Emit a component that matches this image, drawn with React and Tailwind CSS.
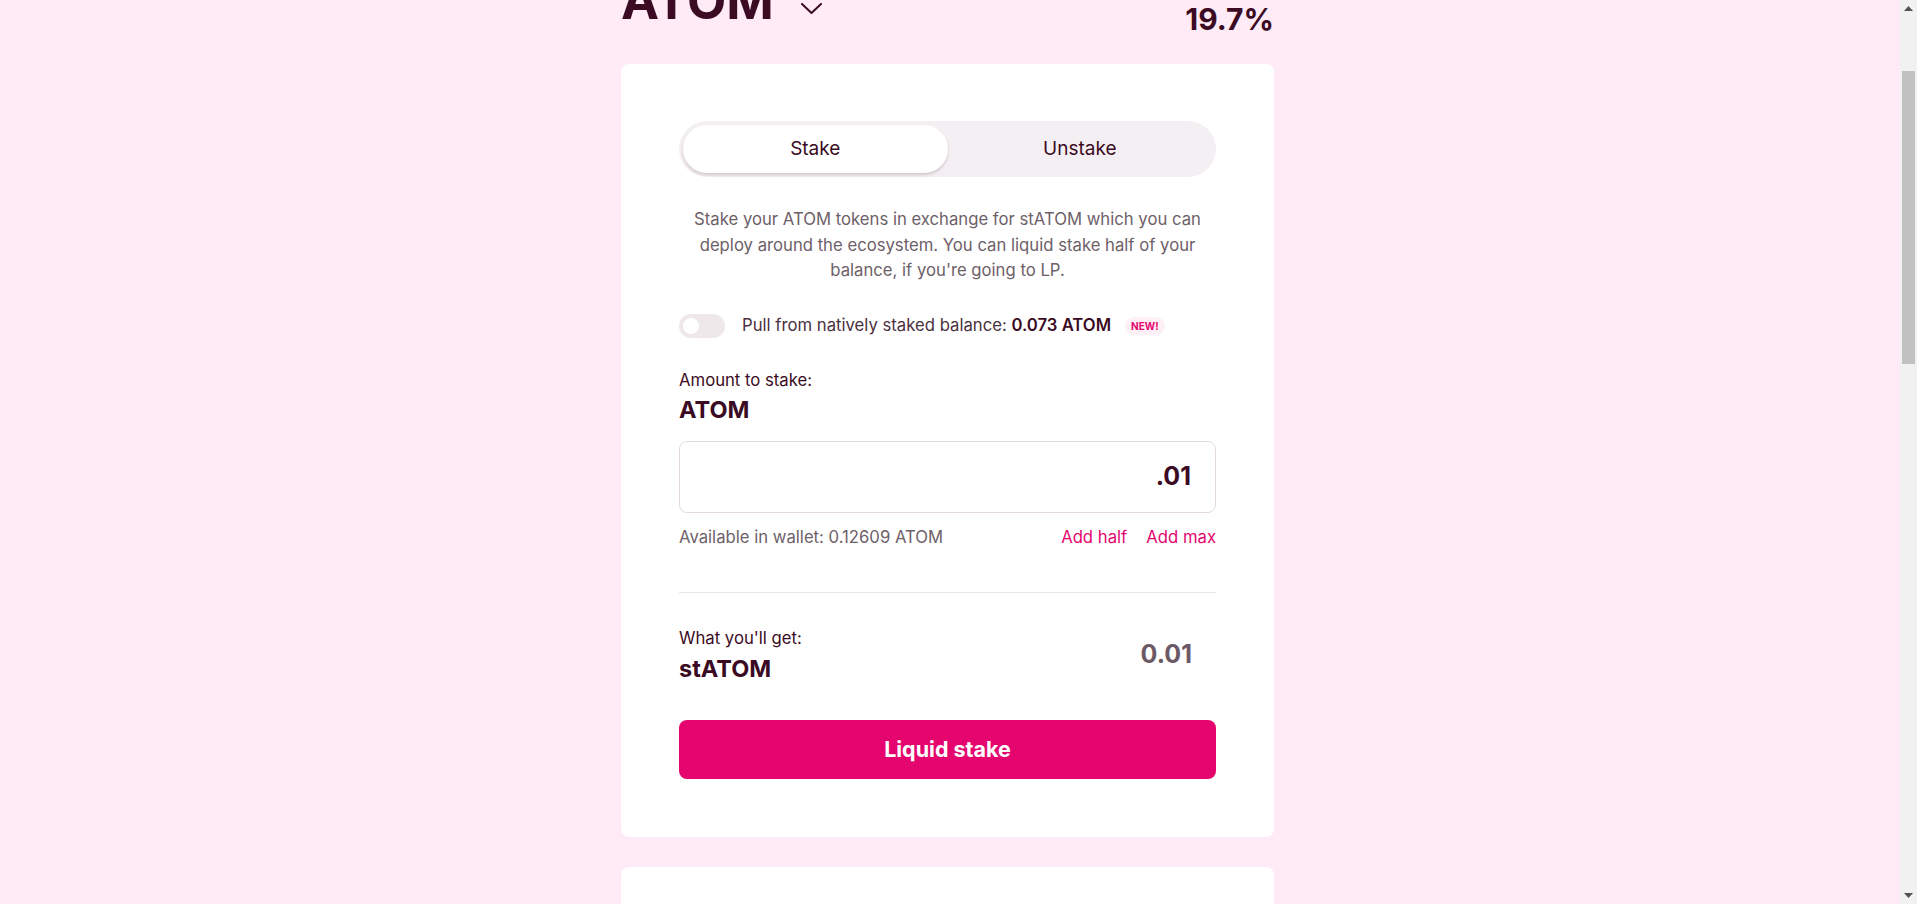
import React from "react";

const dark = "text-[#3a0b23]";

export default function App() {
  return (
    <div
      className="flex h-[904px] w-full overflow-hidden bg-[#feebf6]"
      style={{ fontFamily: "Inter, 'Noto Sans', sans-serif" }}
    >
      <div className="flex-1 min-w-0 pr-[5px]">
        <div className="mx-auto w-[653px]">
          {/* Header */}
          <div className="-mt-[25px] flex justify-between items-start">
            <div className="flex items-center">
              <span className={`text-[51px] leading-[52px] font-bold ${dark}`}>ATOM</span>
              <svg className="ml-[27px] mt-[14px]" width="21" height="11" viewBox="0 0 21 11" fill="none">
                <path d="M1 1 L10.5 10 L20 1" stroke="#3a0b23" strokeWidth="2" strokeLinecap="round" strokeLinejoin="round" />
              </svg>
            </div>
            <div className={`mt-[30px] text-[30px] leading-[28px] font-bold ${dark}`}>19.7%</div>
          </div>

          {/* Card */}
          <div className="mt-[31px] rounded-[8px] bg-white px-[58px] pt-[57px] pb-[58px]">
            {/* Tabs */}
            <div className="flex h-[56px] rounded-full bg-[#f4eff2] p-[4px]">
              <div className={`flex flex-1 items-center justify-center rounded-full bg-white text-[19px] shadow-[0_2px_3px_rgba(60,20,40,0.18)] ${dark}`}>
                Stake
              </div>
              <div className={`flex flex-1 items-center justify-center text-[19px] ${dark}`}>
                Unstake
              </div>
            </div>

            <p className="mt-[30px] text-center text-[16.7px] leading-[25.6px] text-[#6d6068]">
              Stake your ATOM tokens in exchange for stATOM which you can deploy around the ecosystem. You can liquid stake half of your balance, if you're going to LP.
            </p>

            {/* Toggle row */}
            <div className="mt-[30px] flex h-[24px] items-center">
              <div className="flex h-[24px] w-[46px] items-center rounded-full bg-[#eee8eb] px-[4px]">
                <div className="h-[16px] w-[16px] rounded-full bg-white" />
              </div>
              <span className="ml-[17px] text-[16.7px] text-[#4a3040]">
                Pull from natively staked balance: <span className={`font-semibold ${dark}`}>0.073 ATOM</span>
              </span>
              <span className="ml-[14px] rounded-full bg-[#fdf0f6] px-[6px] py-[2px] text-[10px] font-bold leading-[14px] text-[#e4066e]">
                NEW!
              </span>
            </div>

            {/* Amount */}
            <div className={`mt-[30px] text-[16.7px] leading-[24px] ${dark}`}>Amount to stake:</div>
            <div className={`mt-[4px] text-[23.5px] leading-[28px] font-bold ${dark}`}>ATOM</div>

            <div className="mt-[17px] flex h-[72px] items-center justify-end rounded-[8px] border border-[#e3d9df] px-[24px]">
              <span className={`text-[25px] font-bold ${dark}`}>.01</span>
            </div>

            <div className="mt-[13px] flex h-[24px] items-center justify-between text-[16.7px]">
              <span className="text-[#6d6068]">Available in wallet: 0.12609 ATOM</span>
              <div className="flex gap-[19px] text-[#e4066e]">
                <span>Add half</span>
                <span>Add max</span>
              </div>
            </div>

            <div className="mt-[42px] h-px bg-[#ece6ea]" />

            {/* What you'll get */}
            <div className="mt-[33px] flex items-center justify-between">
              <div>
                <div className={`text-[16.7px] leading-[24px] ${dark}`}>What you'll get:</div>
                <div className={`mt-[5px] text-[23.5px] leading-[28px] font-bold ${dark}`}>stATOM</div>
              </div>
              <span className="pr-[24px] text-[25px] font-bold text-[#6b5a66]">0.01</span>
            </div>

            <button className="mt-[37px] flex h-[59px] w-full items-center justify-center rounded-[8px] bg-[#e4066e] text-[21.5px] font-bold text-white">
              Liquid stake
            </button>
          </div>

          {/* Second card */}
          <div className="mt-[30px] h-[200px] rounded-[8px] bg-white px-[33px] pt-[30px]">
            <div className={`text-[26px] font-bold ${dark}`}>About</div>
          </div>
        </div>
      </div>

      {/* Scrollbar */}
      <div className="flex h-[904px] w-[17px] flex-col bg-[#f1f1f1]">
        <div className="flex h-[17px] items-center justify-center">
          <svg width="9" height="5" viewBox="0 0 9 5"><path d="M0 5 L4.5 0 L9 5 Z" fill="#505050" /></svg>
        </div>
        <div className="mt-[54px] mx-[2px] h-[293px] bg-[#c1c1c1]" />
        <div className="flex-1" />
        <div className="flex h-[17px] items-center justify-center">
          <svg width="9" height="5" viewBox="0 0 9 5"><path d="M0 0 L4.5 5 L9 0 Z" fill="#505050" /></svg>
        </div>
      </div>
    </div>
  );
}
